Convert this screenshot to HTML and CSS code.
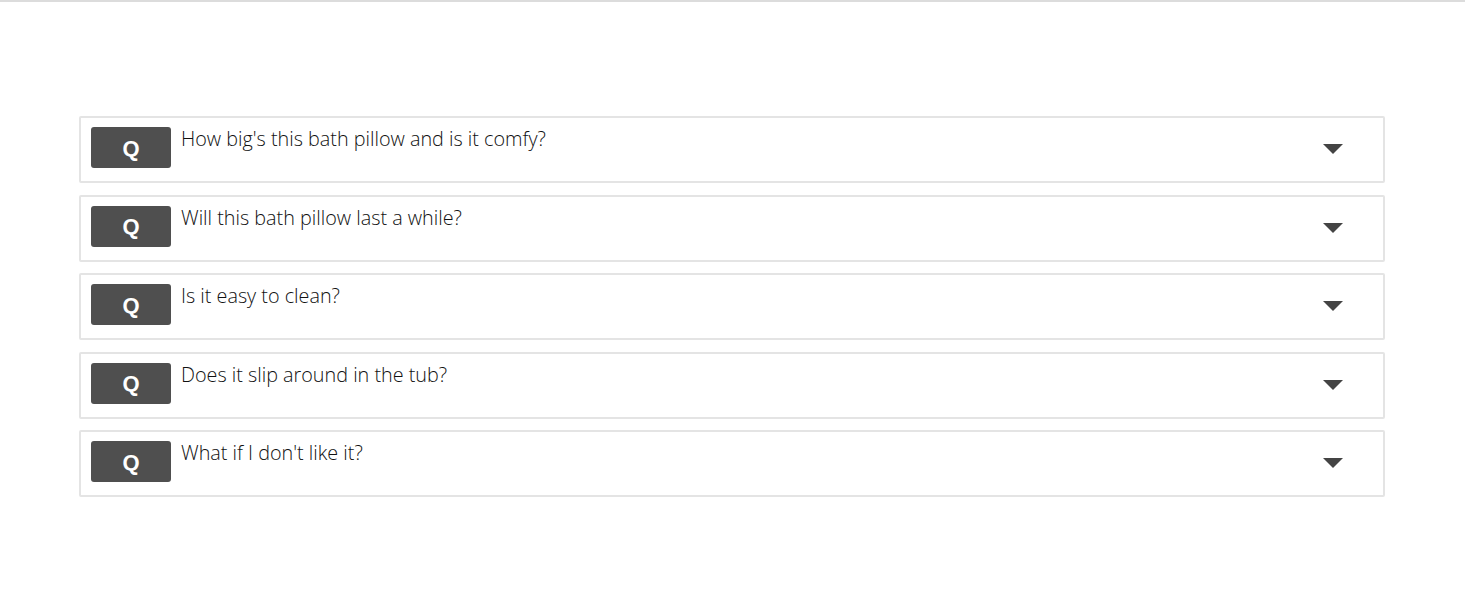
FILE: index.html
```html
<!DOCTYPE html>
<html>
<head>
<meta charset="utf-8">
<link rel="stylesheet" href="styles.css">
</head>
<body>
<div class="topline"></div>
<main class="faq">
  <div class="item">
    <span class="badge">Q</span>
    <span class="question">How big's this bath pillow and is it comfy?</span>
    <span class="caret"></span>
  </div>
  <div class="item">
    <span class="badge">Q</span>
    <span class="question">Will this bath pillow last a while?</span>
    <span class="caret"></span>
  </div>
  <div class="item">
    <span class="badge">Q</span>
    <span class="question">Is it easy to clean?</span>
    <span class="caret"></span>
  </div>
  <div class="item">
    <span class="badge">Q</span>
    <span class="question">Does it slip around in the tub?</span>
    <span class="caret"></span>
  </div>
  <div class="item">
    <span class="badge">Q</span>
    <span class="question">What if I don't like it?</span>
    <span class="caret"></span>
  </div>
</main>
</body>
</html>
```
FILE: styles.css
```css
html, body {
  margin: 0;
  padding: 0;
  background: #fff;
}
body {
  font-family: "Open Sans", "Liberation Sans", sans-serif;
  color: #222;
}
.topline {
  height: 2px;
  background: #dcdcdc;
}
.faq {
  display: flex;
  flex-direction: column;
  gap: 11.5px;
  margin: 114px 80px 0 79px;
}
.item {
  display: flex;
  align-items: flex-start;
  height: 67px;
  box-sizing: border-box;
  border: 2px solid #e4e4e4;
  border-radius: 2px;
  padding: 9px 40px 0 10px;
}
.badge {
  flex: none;
  width: 80px;
  height: 41px;
  border-radius: 3px;
  background: #4f4f4f;
  color: #fff;
  font-family: "Liberation Sans", Arial, sans-serif;
  font-weight: bold;
  font-size: 22px;
  display: flex;
  align-items: center;
  justify-content: center;
  padding-top: 2px;
  box-sizing: border-box;
}
.question {
  flex: 1;
  margin-left: 10px;
  font-size: 19.8px;
  line-height: 24px;
  font-weight: 300;
  color: #111;
}
.caret {
  flex: none;
  align-self: center;
  margin-top: -10px;
  width: 0;
  height: 0;
  border-left: 10px solid transparent;
  border-right: 10px solid transparent;
  border-top: 10px solid #444;
}
```
